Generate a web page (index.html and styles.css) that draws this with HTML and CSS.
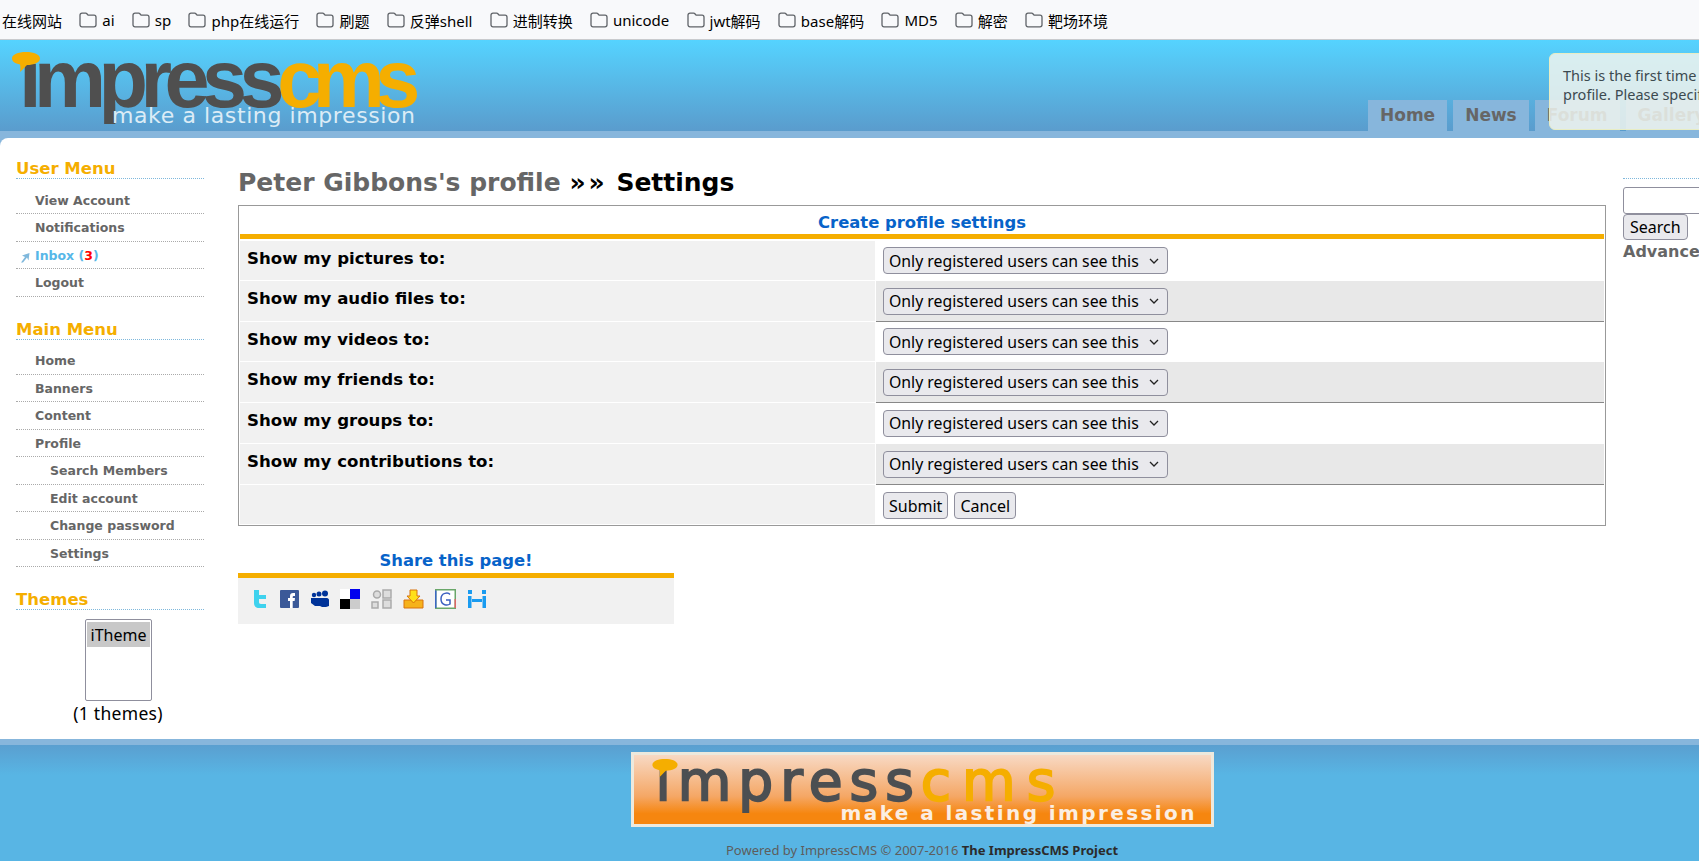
FILE: index.html
```html
<!DOCTYPE html>
<html lang="en">
<head>
    <meta charset="UTF-8">
    <title>Peter Gibbons's profile - Settings</title>
    <link rel="stylesheet" href="styles.css">
</head>
<body>
    <svg class="defs" width="0" height="0">
        <symbol id="folder" viewBox="0 0 18 16">
            <path d="M1 3.2C1 2 1.8 1.2 3 1.2h3.6c.7 0 1.1.3 1.5.8l1 1.2H15c1.2 0 2 .8 2 2v7.6c0 1.2-.8 2-2 2H3c-1.200 0-2-.8-2-2z" fill="none" stroke="#5f6368" stroke-width="1.300"/>
        </symbol>
        <symbol id="bubble" viewBox="0 0 28 20">
            <path d="M14 0c8 0 14 2.500 14 6.500S22 13 15 13c-2 2-4 4-7 7 .5-3 .5-5 0-7.500C3 11.500 0 9.500 0 6.500 0 2.500 6 0 14 0z" fill="#f5ae00"/>
        </symbol>
    </svg>

    <div class="bookmarks">
        <a class="plain">在线网站</a>
        <a><svg class="folder"><use href="#folder"/></svg>ai</a>
        <a><svg class="folder"><use href="#folder"/></svg>sp</a>
        <a><svg class="folder"><use href="#folder"/></svg>php在线运行</a>
        <a><svg class="folder"><use href="#folder"/></svg>刷题</a>
        <a><svg class="folder"><use href="#folder"/></svg>反弹shell</a>
        <a><svg class="folder"><use href="#folder"/></svg>进制转换</a>
        <a><svg class="folder"><use href="#folder"/></svg>unicode</a>
        <a><svg class="folder"><use href="#folder"/></svg>jwt解码</a>
        <a><svg class="folder"><use href="#folder"/></svg>base解码</a>
        <a><svg class="folder"><use href="#folder"/></svg>MD5</a>
        <a><svg class="folder"><use href="#folder"/></svg>解密</a>
        <a><svg class="folder"><use href="#folder"/></svg>靶场环境</a>
    </div>

    <header class="header">
        <div class="logo-col">
            <div class="logo">
                <svg class="logo-bubble"><use href="#bubble"/></svg>
                <span class="logo-dark">ımpress</span><span class="logo-orange">cms</span>
                <span class="logo-tag">make a lasting impression</span>
            </div>
        </div>
        <nav class="tabs">
            <a>Home</a>
            <a>News</a>
            <a>Forum</a>
            <a>Gallery</a>
        </nav>
        <div class="notice">This is the first time you access your<br>profile. Please specify your settings</div>
    </header>

    <div class="wrap">
        <aside class="sidebar">
            <h4>User Menu</h4>
            <ul class="menu">
                <li>View Account</li>
                <li>Notifications</li>
                <li class="inbox">
                    <svg class="inbox-arrow" width="10" height="11" viewBox="0 0 10 11"><path d="M1 10.500L5 5 2 3.500 9.500 1 8.500 8.500 7 5.500 3 10.500z" fill="#7fb8dc"/></svg>
                    Inbox (<b>3</b>)
                </li>
                <li>Logout</li>
            </ul>
            <h4>Main Menu</h4>
            <ul class="menu">
                <li>Home</li>
                <li>Banners</li>
                <li>Content</li>
                <li>Profile</li>
                <li class="sub">Search Members</li>
                <li class="sub">Edit account</li>
                <li class="sub">Change password</li>
                <li class="sub">Settings</li>
            </ul>
            <h4>Themes</h4>
            <div class="themes">
                <div class="theme-list"><span>iTheme</span></div>
                <p>(1 themes)</p>
            </div>
        </aside>

        <main class="main">
            <h1><span class="title-name">Peter Gibbons's profile</span> <span class="title-sep">»»</span> Settings</h1>
            <div class="form-box">
                <div class="form-title">Create profile settings</div>
                <table class="form-table">
                    <tr>
                        <th>Show my pictures to:</th>
                        <td><select><option>Only registered users can see this</option></select></td>
                    </tr>
                    <tr class="even">
                        <th>Show my audio files to:</th>
                        <td><select><option>Only registered users can see this</option></select></td>
                    </tr>
                    <tr>
                        <th>Show my videos to:</th>
                        <td><select><option>Only registered users can see this</option></select></td>
                    </tr>
                    <tr class="even">
                        <th>Show my friends to:</th>
                        <td><select><option>Only registered users can see this</option></select></td>
                    </tr>
                    <tr class="tall">
                        <th>Show my groups to:</th>
                        <td><select><option>Only registered users can see this</option></select></td>
                    </tr>
                    <tr class="even">
                        <th>Show my contributions to:</th>
                        <td><select><option>Only registered users can see this</option></select></td>
                    </tr>
                    <tr>
                        <th></th>
                        <td class="actions"><button>Submit</button><button>Cancel</button></td>
                    </tr>
                </table>
            </div>

            <div class="share">
                <div class="share-title">Share this page!</div>
                <div class="share-icons">
                    <svg width="18" height="20" viewBox="0 0 18 20"><path d="M3 1h5v5h7v4H8v3c0 1 .5 2 2 2h5v4H8c-3 0-5-2-5-5z" fill="#3fd2ee"/></svg>
                    <svg width="19" height="20" viewBox="0 0 19 20"><rect y="1" width="19" height="18" rx="1" fill="#3b5998"/><path d="M10 19v-7H8V9h2V7c0-2 1-3 3-3h2v3h-1.500c-.5 0-.8.3-.8 1v1H15l-.4 3h-1.900v7z" fill="#fff"/></svg>
                    <svg width="19" height="20" viewBox="0 0 19 20"><circle cx="4" cy="6" r="2.200" fill="#003399"/><circle cx="9" cy="5" r="2.500" fill="#003399"/><circle cx="15" cy="4.500" r="3" fill="#003399"/><path d="M1 9h16c1 0 2 1 2 2v6l-3 1h-4l-2-1H5l-4-3z" fill="#003399"/></svg>
                    <svg width="20" height="20" viewBox="0 0 20 20"><rect width="20" height="20" fill="#fff"/><rect x="10" width="10" height="10" fill="#0000ee"/><rect y="10" width="10" height="10" fill="#000"/><rect x="10" y="10" width="10" height="10" fill="#ccc"/></svg>
                    <svg width="21" height="20" viewBox="0 0 21 20"><g fill="#ddd" stroke="#aaa" stroke-width="1.500"><circle cx="6" cy="5.500" r="3.500"/><rect x="12" y="1" width="8" height="8"/><rect x="1" y="13" width="6" height="6"/><rect x="12" y="11" width="8" height="8"/></g></svg>
                    <svg width="21" height="20" viewBox="0 0 21 20"><path d="M1 11h19v8H1z" fill="#f6b21b" stroke="#d9730d"/><path d="M7 1h7v6h3l-6.500 7L4 7h3z" fill="#ffe01a" stroke="#d9730d"/></svg>
                    <svg width="21" height="20" viewBox="0 0 21 20"><rect x=".75" y=".75" width="19.500" height="18.500" fill="#fff" stroke="#6aa76a" stroke-width="1.500"/><path d="M.75 19V1.500" stroke="#3a66c4" stroke-width="1.500"/><path d="M20.250 19V10" stroke="#d66" stroke-width="1.500"/><path d="M15 5.500C13.500 3.500 6 3 6 10c0 7 7 6.500 9 5v-4h-4" fill="none" stroke="#3a5fc0" stroke-width="1.500"/></svg>
                    <svg width="20" height="20" viewBox="0 0 20 20" fill="#1a9bf0"><rect x="1" y="1" width="4" height="4"/><rect x="15" y="1" width="4" height="4"/><rect x="1" y="7" width="3.500" height="12"/><rect x="15.500" y="7" width="3.500" height="12"/><rect x="5" y="10" width="10" height="3"/></svg>
                </div>
            </div>
        </main>

        <aside class="search">
            <input type="text">
            <button>Search</button>
            <a>Advanced Search</a>
        </aside>
    </div>

    <footer class="footer">
        <div class="banner">
            <svg class="banner-bubble"><use href="#bubble"/></svg>
            <span class="banner-dark">ımpress</span><span class="banner-orange">cms</span>
            <span class="banner-tag">make a lasting impression</span>
        </div>
        <p>Powered by ImpressCMS © 2007-2016 <b>The ImpressCMS Project</b></p>
        <p>Theme by <b>The ImpressCMS Project</b></p>
    </footer>
</body>
</html>
```

FILE: styles.css
```css
html, body {
    margin: 0;
    height: 861px;
    overflow: hidden;
}
body {
    width: 1699px;
    font-family: "Noto Sans", "Noto Sans CJK SC", sans-serif;
    background-color: #58b5e4;
    color: #000;
}
.defs {
    display: block;
}

/* bookmark bar */
.bookmarks {
    display: flex;
    align-items: center;
    gap: 17.250px;
    height: 39px;
    padding: 1px 0 0 2px;
    box-sizing: content-box;
    height: 38px;
    font-size: 15px;
    background-color: #f8f9fb;
    border-bottom: 1px solid #c9cbce;
    white-space: nowrap;
}
.bookmarks a {
    display: flex;
    align-items: center;
    gap: 5px;
}
.folder {
    width: 18px;
    height: 16px;
}

/* header */
.header {
    position: relative;
    display: flex;
    height: 91px;
    background: linear-gradient(#55d3ff, #5a9ccd);
}
.logo-col {
    flex: 0 0 1368px;
}
.logo {
    position: relative;
    margin: -7px 0 0 19px;
    font-family: "Liberation Sans", sans-serif;
    font-weight: bold;
    font-size: 81px;
    line-height: 92px;
    letter-spacing: -7.500px;
    white-space: nowrap;
}
.logo-dark {
    color: #4f4f4f;
}
.logo-orange {
    letter-spacing: -9.500px;
    color: #f5ae00;
}
.logo-bubble {
    position: absolute;
    left: -7px;
    top: 19px;
    width: 28px;
    height: 20px;
}
.logo-tag {
    position: absolute;
    left: 93px;
    top: 70px;
    font-family: "DejaVu Sans", sans-serif;
    font-weight: normal;
    font-size: 22px;
    line-height: 26px;
    letter-spacing: .6px;
    color: #dcecf6;
}
.tabs {
    display: flex;
    flex: none;
    align-self: flex-end;
    gap: 6px;
    margin-bottom: -1px;
}
.tabs a {
    padding: 0 12px;
    height: 32px;
    line-height: 30px;
    font-family: "DejaVu Sans", sans-serif;
    font-weight: bold;
    font-size: 17px;
    color: #666;
    background-color: #87b6dc;
}
.notice {
    position: absolute;
    left: 1549px;
    top: 13px;
    width: 300px;
    height: 77px;
    box-sizing: border-box;
    padding: 12px 13px;
    font-size: 14.500px;
    line-height: 19px;
    color: #3c4a50;
    background-color: rgba(240, 245, 238, .85);
    border: 1px solid #e8edc4;
    border-radius: 6px;
    white-space: nowrap;
}

/* page body */
.wrap {
    display: flex;
    height: 608px;
    box-sizing: border-box;
    border-top: 7px solid #87b6dc;
    background-color: #87b6dc;
}
.sidebar {
    flex: 0 0 188px;
    padding: 20px 34px 0 16px;
    background-color: #fff;
    border-top-left-radius: 8px;
    font-family: "DejaVu Sans", sans-serif;
}
.sidebar h4 {
    margin: 22px 0 0;
    height: 20px;
    line-height: 22px;
    font-size: 16.500px;
    color: #f5ae00;
    border-bottom: 1px dotted #7fb8dc;
}
.sidebar h4:first-child {
    margin-top: 0;
}
.menu {
    margin: 7.500px 0 0;
    padding: 0;
    list-style: none;
}
.menu li {
    position: relative;
    height: 26.500px;
    padding-left: 19px;
    line-height: 28px;
    font-size: 12.500px;
    font-weight: bold;
    color: #666;
    border-bottom: 1px dotted #aaa;
}
.menu li.sub {
    padding-left: 34px;
}
.menu li.inbox {
    color: #57b7e8;
}
.inbox b {
    color: #f00;
}
.inbox-arrow {
    position: absolute;
    left: 4px;
    top: 10px;
}
.themes {
    padding-left: 16px;
    text-align: center;
}
.theme-list {
    width: 63px;
    height: 76px;
    margin: 9px auto 0;
    padding: 2px 1px;
    box-sizing: content-box;
    text-align: left;
    font-family: "Noto Sans", sans-serif;
    font-size: 16px;
    border: 1px solid #8f8f9d;
    border-radius: 2px;
}
.theme-list span {
    display: block;
    height: 25px;
    padding-left: 4px;
    line-height: 26px;
    background-color: #c8c8c8;
}
.themes p {
    margin: 0;
    font-family: "Noto Sans", sans-serif;
    font-size: 17.500px;
    line-height: 24px;
    letter-spacing: .3px;
}
.main {
    flex: 0 0 1368px;
    padding: 0 17px 0 0;
    background-color: #fff;
}
.main h1 {
    margin: 28px 0 5px;
    height: 34px;
    line-height: 34px;
    font-family: "DejaVu Sans", sans-serif;
    font-size: 25px;
    white-space: nowrap;
}
.title-name {
    color: #666;
}
.title-sep {
    letter-spacing: 3px;
}
.form-box {
    box-sizing: border-box;
    height: 321px;
    padding: 1px;
    border: 1px solid #999;
}
.form-title {
    height: 27px;
    line-height: 31px;
    text-align: center;
    font-family: "DejaVu Sans", sans-serif;
    font-weight: bold;
    font-size: 16.400px;
    color: #0763c9;
    border-bottom: 5px solid #f5ae00;
}
.form-table {
    width: 100%;
    margin-top: 2px;
    border-collapse: separate;
    border-spacing: 0;
}
.form-table th {
    width: 636px;
    height: 40px;
    box-sizing: border-box;
    padding: 7px 7px 0;
    vertical-align: top;
    text-align: left;
    font-family: "DejaVu Sans", sans-serif;
    font-size: 16.600px;
    line-height: 22px;
    background-color: #f1f1f1;
    border-bottom: 1px solid #fff;
    border-right: 1px solid #fff;
}
.form-table .even th, .form-table .tall th {
    height: 41px;
}
.form-table td {
    padding: 5px 7px;
    border-bottom: 1px solid #fff;
    line-height: 0;
}
.form-table .even td {
    background-color: #e8e8e8;
    border-bottom-color: #888;
}
select, .form-table button, .search button {
    font-family: "Noto Sans", sans-serif;
    font-size: 16px;
    color: #000;
    background-color: #e9e9ed;
    border: 1px solid #8f8f9d;
    border-radius: 4px;
}
select {
    appearance: none;
    width: 285px;
    height: 27px;
    padding: 0 5px;
    font-size: 15.800px;
    background-image: url("data:image/svg+xml,%3Csvg xmlns='http://www.w3.org/2000/svg' width='10' height='6'%3E%3Cpath d='M1 1l4 4 4-4' fill='none' stroke='%23222' stroke-width='1.300'/%3E%3C/svg%3E");
    background-repeat: no-repeat;
    background-position: right 8px center;
}
.form-table button {
    height: 27px;
    padding: 0 5px;
    margin-right: 6px;
}
.form-table .actions {
    padding-top: 6px;
    padding-bottom: 4px;
}

/* share box */
.share {
    width: 436px;
    margin-top: 24px;
}
.share-title {
    height: 23px;
    line-height: 22px;
    text-align: center;
    font-family: "DejaVu Sans", sans-serif;
    font-weight: bold;
    font-size: 16.400px;
    color: #0763c9;
    border-bottom: 5px solid #f5ae00;
}
.share-icons {
    display: flex;
    align-items: center;
    gap: 11px;
    height: 42px;
    padding: 0 0 4px 13px;
    background-color: #f1f1f1;
}

/* right column */
.search {
    flex: none;
    width: 200px;
    padding-top: 40px;
    background-color: #fff;
    font-family: "DejaVu Sans", sans-serif;
}
.search::before {
    content: "";
    display: block;
    margin-bottom: 8px;
    border-top: 1px dotted #7fb8dc;
}
.search input {
    display: block;
    box-sizing: border-box;
    width: 150px;
    height: 27px;
    margin: 0;
    padding: 0;
    border: 1px solid #8f8f9d;
    border-radius: 3px;
}
.search button {
    display: block;
    height: 26px;
    padding: 0 6px;
}
.search a {
    display: block;
    margin-top: 1px;
    font-weight: bold;
    font-size: 16px;
    line-height: 22px;
    color: #666;
    white-space: nowrap;
}

/* footer */
.footer {
    height: 116px;
    box-sizing: border-box;
    padding: 7px 93px 0 238px;
    text-align: center;
    background: linear-gradient(#5a9fd0, #58b5e4 30px);
    border-top: 6px solid #87b6dc;
    font-size: 13px;
    color: #5d5d5d;
}
.footer p {
    margin: 0;
    line-height: 16px;
}
.footer b {
    color: #2b2b2b;
}
.banner {
    position: relative;
    width: 577px;
    height: 69px;
    margin: 0 auto 15px;
    text-align: left;
    font-family: "DejaVu Sans", sans-serif;
    font-size: 55px;
    line-height: 52px;
    letter-spacing: 7px;
    white-space: nowrap;
    -webkit-text-stroke: 2px;
    background: linear-gradient(#f8d9c4, #f5a765 60%, #f6860f 85%);
    border: 3px solid #ede9dd;
}
.banner-dark {
    margin-left: 22px;
    color: #4c4f52;
}
.banner-orange {
    margin-left: 0;
    letter-spacing: 11px;
    color: #f5ae00;
}
.banner-bubble {
    position: absolute;
    left: 18px;
    top: 4px;
    width: 26px;
    height: 18px;
}
.banner-tag {
    position: absolute;
    left: 207px;
    top: 46px;
    font-size: 20px;
    line-height: 24px;
    font-weight: bold;
    letter-spacing: 2.400px;
    -webkit-text-stroke: 0;
    color: #fbeee2;
}
```
